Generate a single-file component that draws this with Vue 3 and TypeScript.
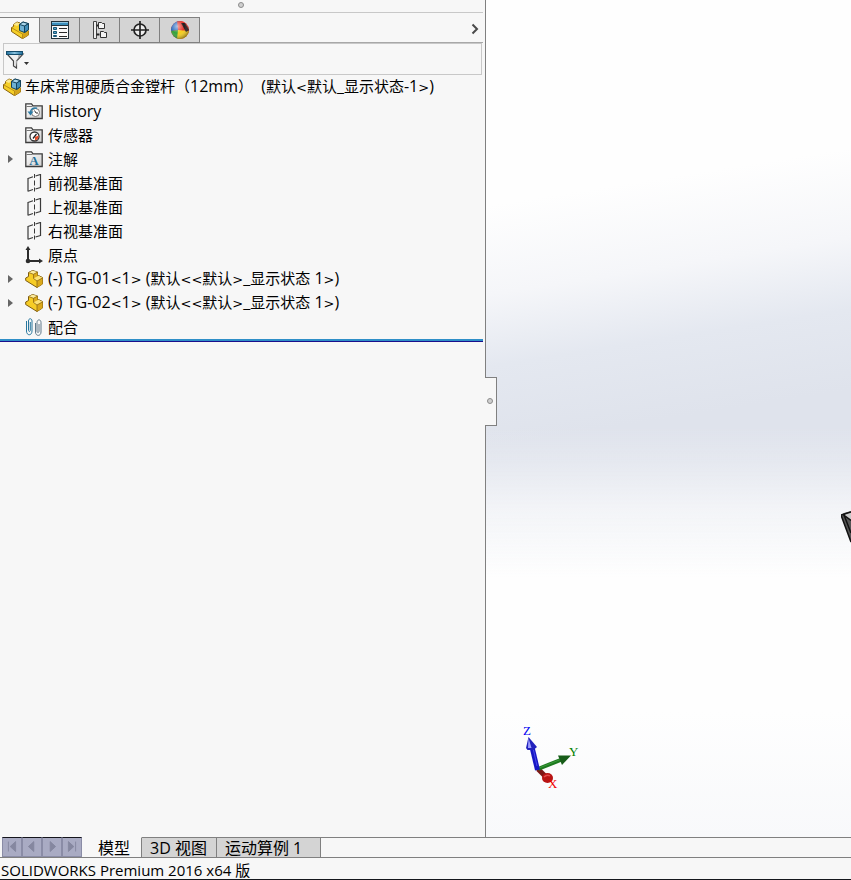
<script setup lang="ts">
import { ref } from 'vue'

interface TreeNode {
  label: string
  icon: string
  expandable?: boolean
}

interface TextRun {
  text: string
  kind: 'latin' | 'sign' | 'han'
}

const panelTabs = [
  { id: 'assembly', title: 'FeatureManager' },
  { id: 'property', title: 'PropertyManager' },
  { id: 'config', title: 'ConfigurationManager' },
  { id: 'dimxpert', title: 'DimXpertManager' },
  { id: 'display', title: 'DisplayManager' },
]
const activePanel = ref('assembly')
const filterText = ref('')

const rootLabel = '车床常用硬质合金镗杆（12mm）  (默认<默认_显示状态-1>)'
const nodes: TreeNode[] = [
  { label: 'History', icon: 'history' },
  { label: '传感器', icon: 'sensor' },
  { label: '注解', icon: 'notes', expandable: true },
  { label: '前视基准面', icon: 'plane' },
  { label: '上视基准面', icon: 'plane' },
  { label: '右视基准面', icon: 'plane' },
  { label: '原点', icon: 'origin' },
  { label: '(-) TG-01<1> (默认<<默认>_显示状态 1>)', icon: 'part', expandable: true },
  { label: '(-) TG-02<1> (默认<<默认>_显示状态 1>)', icon: 'part', expandable: true },
  { label: '配合', icon: 'mates' },
]

// Splits a label by script, so that each run gets its own size and family.
function runs(label: string): TextRun[] {
  const parts = label.match(/[<>]+|[\x20-\x3b=\x3f-\x7e]+|[^\x20-\x7e]+/g) ?? []
  return parts.map((text): TextRun => ({
    text,
    kind: /^[<>]/.test(text) ? 'sign' : /^[\x20-\x7e]/.test(text) ? 'latin' : 'han',
  }))
}

const navButtons = [
  { title: 'First', path: 'M6 4v11M14 4l-6 5.500 6 5.500z' },
  { title: 'Previous', path: 'M12 4l-6 5.500 6 5.500z' },
  { title: 'Next', path: 'M8 4l6 5.500-6 5.500z' },
  { title: 'Last', path: 'M6 4l6 5.500-6 5.500zM14 4v11' },
]
const sheets = ['模型', '3D 视图', '运动算例 1']
const activeSheet = ref('模型')
</script>

<template>
  <div class="app">
    <svg class="defs" aria-hidden="true">
      <defs>
        <linearGradient id="folderFill" x1="0" y1="0" x2="1" y2="1">
          <stop offset="0" stop-color="#ffffff" />
          <stop offset="1" stop-color="#cfcfcf" />
        </linearGradient>
        <linearGradient id="funnelTop" x1="0" x2="1">
          <stop offset="0" stop-color="#1e6f9c" />
          <stop offset="0.5" stop-color="#8cc4e0" />
          <stop offset="1" stop-color="#1e6f9c" />
        </linearGradient>
        <radialGradient id="ballShade" cx="0.35" cy="0.3" r="0.75">
          <stop offset="0" stop-color="#fff" stop-opacity="0.6" />
          <stop offset="0.5" stop-color="#fff" stop-opacity="0" />
          <stop offset="1" stop-color="#000" stop-opacity="0.45" />
        </radialGradient>
        <clipPath id="ballClip"><circle cx="9" cy="9" r="9" /></clipPath>
      </defs>
      <symbol id="assembly" viewBox="0 0 18 18">
        <path d="M.5 6.500 2.500 5.500V3.500L6 1l3 1v5l8.500 3v4l-6 3.700L.5 10.500z" fill="#f5cf28" stroke="#8a6310" />
        <path d="M2.500 3.500 6 1.200 9 2.500 6 5z" fill="#fbe98f" />
        <path d="M11.500 12v5.500L17.500 14V9z" fill="#d5a51b" />
        <path d="M1 7l10.500 6v4.500" fill="none" stroke="#b98d17" />
        <path d="M8.500 3.500 12 1l5.500 1.700v6L13.500 11.500 8.500 9.500z" fill="#6fb1d4" stroke="#14435c" />
        <path d="M8.500 3.500 13.500 5l4-2.300L12 1z" fill="#a9d5eb" stroke="#14435c" />
        <path d="M13.500 5l4-2.300v6L13.500 11.500z" fill="#418db8" stroke="#14435c" />
      </symbol>
      <symbol id="property" viewBox="0 0 18 18">
        <rect x=".5" y=".5" width="17" height="17" fill="#fbfbfb" stroke="#24333c" />
        <path d="M1 1h16v3H1z" fill="#3b8fbd" />
        <path d="M1 1.500h16" stroke="#8fc6e2" />
        <path d="M1 4.500h16" stroke="#24333c" />
        <path d="M2.500 6.500h3v2h-3zM2.500 10.500h3v2h-3zM2.500 14.500h3v1h-3z" fill="#5aa3c9" stroke="#175777" />
        <path d="M8 7.500h8M8 11.500h8M8 15.500h8" stroke="#2b2b2b" />
      </symbol>
      <symbol id="config" viewBox="0 0 18 18">
        <path d="M2.500.500h3v17h-3z" fill="#eee" stroke="#444" />
        <path d="M5.500 4.500h3M5.500 13.500h3" stroke="#222" stroke-width="2" />
        <path d="M7.500 1.500h3l1 1h2v5h-6zM9.500 10.500h3l1 1h2v5h-6z" fill="#f5f5f5" stroke="#333" />
      </symbol>
      <symbol id="dimxpert" viewBox="0 0 18 18">
        <circle cx="9" cy="9" r="6" fill="#eee" stroke="#222" stroke-width="1.7" />
        <path d="M9 0v18M0 9h18" stroke="#222" stroke-width="1.7" />
      </symbol>
      <symbol id="display" viewBox="0 0 18 18">
        <g clip-path="url(#ballClip)">
          <path d="M0 0h18v18H0z" fill="#e33127" />
          <path d="M0 0h9L8 9 0 10z" fill="#2a6cc0" />
          <path d="M6 0h10l-3 10-6-1z" fill="#e5352b" />
          <path d="M0 10l8-1 1 9H0z" fill="#36a13a" />
          <path d="M7 9l11 1v8H6z" fill="#f5cd1c" />
          <path d="M10 2l4 0 4 7-3 2z" fill="#241a1b" />
        </g>
        <circle cx="9" cy="9" r="9" fill="url(#ballShade)" />
      </symbol>
      <symbol id="folder" viewBox="0 0 18 18">
        <path d="M.8 16.500V1.800h5.700l1.500 2h9.200v12.700z" fill="url(#folderFill)" stroke="#3d3d3d" stroke-width="1.3" />
        <path d="M1.500 4.500h6" stroke="#777" />
      </symbol>
      <symbol id="history" viewBox="0 0 18 18">
        <use href="#folder" />
        <circle cx="10.500" cy="10.500" r="4" fill="#fff" stroke="#777" />
        <path d="M9.500 8.500l1.500 2.500h2" fill="none" stroke="#333" />
        <path d="M12 6.300C8.500 5 5.500 7 5.500 10.500" fill="none" stroke="#2b7ba5" stroke-width="1.5" />
        <path d="M2.500 9.500l3 4 3-4z" fill="#2b7ba5" />
      </symbol>
      <symbol id="sensor" viewBox="0 0 18 18">
        <use href="#folder" />
        <circle cx="9.500" cy="10.500" r="4.500" fill="#fff" stroke="#333" stroke-width="1.3" />
        <path d="M10 11l3.500-1.500c.5 2.500-1 4.500-3.500 5z" fill="#e34a28" />
        <path d="M8 12.500l3.500-4.500" stroke="#222" stroke-width="1.3" />
      </symbol>
      <symbol id="plane" viewBox="0 0 18 18">
        <path d="M3 4v13.500M3 4.500l5-1.700M10.500 2l5-1.500V14M3 17.200l5-1.700M10.500 15l5-1.500" fill="none" stroke="#3a3a3a" stroke-width="1.2" />
        <path d="M9.500 0v4M9.500 6.500v5M9.500 13.500v4" stroke="#3a3a3a" />
      </symbol>
      <symbol id="origin" viewBox="0 0 18 18">
        <path d="M3 3v12h12" fill="none" stroke="#2d2d2d" stroke-width="2" />
        <path d="M3 0l2.500 4H.5zM18 15l-4-2.500v5z" fill="#2d2d2d" />
        <circle cx="3" cy="15" r="2.300" fill="#2d2d2d" />
      </symbol>
      <symbol id="part" viewBox="0 0 18 18">
        <path d="M3.500 2.500 7.500.5 12.500 2v4l1-.5 4 2V14L12 17.500.700 10.500V8L3.500 6.500z" fill="#f6cc26" stroke="#7c5a12" />
        <path d="M3.500 2.500 7.500.8l5 1.300-4 2.200z" fill="#fcec9f" />
        <path d="M8.500 4.300v4.200L12.500 6.500V2.200z" fill="#dbab1e" />
        <path d="M8.500 8.500l5-2.700 4 2L12 11z" fill="#fbe27a" />
        <path d="M12 11v6.500l5.500-3.500V8z" fill="#dba91b" />
        <path d="M3.500 2.500l5 1.800v4.200L12 11v6.500M8.500 4.300l4-2.200M12 11l5.500-3" fill="none" stroke="#8e6816" stroke-width=".8" />
      </symbol>
      <symbol id="mates" viewBox="0 0 18 18">
        <path d="M1.500 3v10c0 5 5.500 5 5.500 0V3C7 0 3.500 0 3.500 3v9c0 2 1.800 2 1.800 0V4" fill="none" stroke="#28779e" />
        <path d="M10.500 5v9c0 4.500 5.500 4.500 5.500 0V4.500c0-3.500-4-3.500-4 0V13c0 2 2 2 2 0V6" fill="none" stroke="#60798a" />
      </symbol>
    </svg>

    <main class="workspace">
      <aside class="panel">
        <div class="grip"><span class="dot"></span></div>
        <div class="tab-row">
          <button
            v-for="tab in panelTabs"
            :key="tab.id"
            type="button"
            class="panel-tab"
            :class="{ active: activePanel === tab.id }"
            :aria-label="tab.title"
            @click="activePanel = tab.id"
          >
            <svg class="icon"><use :href="'#' + tab.id" /></svg>
          </button>
          <button type="button" class="more" aria-label="More tabs">
            <svg viewBox="0 0 8 12"><path d="M1.500 1.500 6 6l-4.500 4.500" fill="none" stroke="#4a4a4a" stroke-width="2" /></svg>
          </button>
        </div>
        <div class="filter">
          <button type="button" class="filter-button" aria-label="Filter options">
            <svg viewBox="0 0 24 20">
              <path d="M1 5h16l-6.500 7v7L7.500 17v-5z" fill="#f2f2f2" stroke="#444" stroke-width="1.2" />
              <path d="M12.500 6h3L10 12v6z" fill="#aaa" />
              <rect x=".5" y="2.500" width="16" height="3" fill="url(#funnelTop)" stroke="#174e6d" />
              <path d="M18 13h5l-2.500 3z" fill="#333" />
            </svg>
          </button>
          <input v-model="filterText" type="text" aria-label="Filter" />
        </div>
        <div class="tree-root">
          <svg class="icon"><use href="#assembly" /></svg>
          <span><span v-for="(run, i) in runs(rootLabel)" :key="i" :class="run.kind">{{ run.text }}</span></span>
        </div>
        <ul class="tree">
          <li v-for="node in nodes" :key="node.label">
            <button v-if="node.expandable" type="button" class="expander" :aria-label="'Expand ' + node.label">
              <svg viewBox="0 0 5 8"><path d="M0 0l5 4-5 4z" fill="#666" /></svg>
            </button>
            <span v-else class="expander"></span>
            <svg v-if="node.icon === 'notes'" class="icon" viewBox="0 0 18 18">
              <use href="#folder" />
              <text x="9" y="15" text-anchor="middle" class="note-letter">A</text>
            </svg>
            <svg v-else class="icon"><use :href="'#' + node.icon" /></svg>
            <span><span v-for="(run, i) in runs(node.label)" :key="i" :class="run.kind">{{ run.text }}</span></span>
          </li>
        </ul>
        <div class="rollback"></div>
      </aside>

      <section class="viewport">
        <button type="button" class="splitter" aria-label="Collapse panel"><span class="dot"></span></button>
        <svg class="model" viewBox="0 0 10 32">
          <path d="M0 4 3 2l7-2v32L8 25z" fill="#555" />
          <path d="M3 4l7-3v8z" fill="#c9c9c9" />
          <path d="M0 4l10-3M0 4l10 27M2 3.500l8 6M3 4l7 18" fill="none" stroke="#111" stroke-width="1.5" />
        </svg>
        <svg class="triad" viewBox="0 0 60 70">
          <path d="M18 47l8 8" stroke="#7d1717" stroke-width="5" />
          <path d="M18 47l25-10" stroke="#1d7a1f" stroke-width="4" />
          <path d="M19 46l24-9.500" stroke="#3b9b3b" />
          <path d="M38 33.500l13 0-9 9.500z" fill="#175c19" />
          <path d="M17.500 48 12 25" stroke="#1717c4" stroke-width="5" />
          <path d="M17 44l-4-18" stroke="#4747ea" />
          <path d="M8.500 15 17 25l-3.500 3H7.500l-1.500-2z" fill="#2222bd" />
          <path d="M8.500 16l3 10H8z" fill="#a0a0ff" />
          <ellipse cx="27.500" cy="56" rx="5.500" ry="5" fill="#b81414" />
          <path d="M24 55q3-3 6-1" fill="none" stroke="#e34b4b" stroke-width="1.5" />
          <text x="3" y="13" fill="#0000f0">Z</text>
          <text x="49" y="34" fill="#008000">Y</text>
          <text x="28" y="66" fill="#f00000">X</text>
        </svg>
      </section>
    </main>

    <nav class="sheet-bar">
      <div class="sheet-nav">
        <button v-for="item in navButtons" :key="item.title" type="button" :aria-label="item.title">
          <svg viewBox="0 0 20 20"><path :d="item.path" fill="#85879f" stroke="#85879f" stroke-width="1" /></svg>
        </button>
      </div>
      <button
        v-for="sheet in sheets"
        :key="sheet"
        type="button"
        class="sheet"
        :class="{ active: activeSheet === sheet }"
        @click="activeSheet = sheet"
      >{{ sheet }}</button>
      <div class="sheet-rest"></div>
    </nav>
    <footer class="status">SOLIDWORKS Premium 2016 x64 版</footer>
  </div>
</template>

<style>
body {
  margin: 0;
}
</style>

<style scoped>
.app {
  display: flex;
  flex-direction: column;
  height: 100vh;
  overflow: hidden;
  background: #f7f7f7;
  color: #000;
  font-family: "Open Sans", "Noto Sans CJK SC", sans-serif;
  font-size: 15px;
  line-height: 24px;
}

.defs {
  position: absolute;
  width: 0;
  height: 0;
}

button {
  box-sizing: border-box;
  margin: 0;
  padding: 0;
  border: 0;
  background: none;
  color: inherit;
  font: inherit;
}

svg {
  display: block;
}

.icon {
  flex: none;
  width: 18px;
  height: 18px;
}

.note-letter {
  fill: #1f6f99;
  font: bold 13px "Liberation Serif", serif;
}

.latin {
  font-size: 16px;
}

.sign {
  font-family: "DejaVu Sans", sans-serif;
  font-size: 13px;
}

.dot {
  box-sizing: border-box;
  width: 6px;
  height: 6px;
  border: 1px solid #8c8c8c;
  border-radius: 50%;
  background: #d0d0d0;
}

.workspace {
  flex: 1;
  display: flex;
  min-height: 0;
}

.panel {
  box-sizing: border-box;
  flex: 0 0 57.1%;
  min-width: 0;
  padding-right: 2px;
  border-right: 1px solid #808080;
}

.grip {
  display: flex;
  justify-content: center;
  align-items: center;
  height: 10px;
  padding-bottom: 2px;
  border-bottom: 1px solid #c8c8c8;
}

.tab-row {
  display: flex;
  height: 25px;
  margin-top: 4px;
  border-bottom: 1px solid #a8a8a8;
}

.panel-tab {
  display: flex;
  justify-content: center;
  align-items: center;
  width: 40px;
  height: 26px;
  border: 1px solid #808080;
  border-left: 0;
  background: #d4d4d4;
}

.panel-tab.active {
  border-bottom-color: #f7f7f7;
  background: #f7f7f7;
}

.more {
  margin-left: auto;
  padding: 0 4px 2px;
}

.more svg {
  width: 8px;
  height: 12px;
}

.filter {
  display: flex;
  align-items: center;
  height: 30px;
  margin: 0 1px 0 3px;
  border: 1px solid #c8c8c8;
}

.filter-button {
  padding: 0 2px;
}

.filter-button svg {
  width: 24px;
  height: 20px;
}

.filter input {
  flex: 1;
  min-width: 0;
  padding: 0;
  border: 0;
  outline: 0;
  background: transparent;
  font: inherit;
}

.tree-root,
.tree li {
  display: flex;
  align-items: center;
  height: 24px;
  white-space: pre;
}

.tree-root {
  gap: 4px;
  padding-left: 3px;
}

.tree {
  margin: 0;
  padding: 0;
  list-style: none;
}

.tree li {
  gap: 5px;
}

.expander {
  display: flex;
  justify-content: center;
  width: 20px;
}

.expander svg {
  width: 5px;
  height: 8px;
}

.rollback {
  height: 2px;
  border-bottom: 1px solid #1a0f8c;
  background: #2f8fc8;
}

.viewport {
  position: relative;
  flex: 1;
  min-width: 0;
  background:
    linear-gradient(rgba(254, 254, 254, 0) 51%, rgba(254, 254, 254, 0.2) 55%, rgba(254, 254, 254, 0.65) 61%, #fefefe 69%, #fefefe 85%, #f8f9fb 100%),
    linear-gradient(171deg, #fefefe 23%, #f5f6f9 33%, #e4e8f0 41%, #dfe3ec 50%);
}

.splitter {
  position: absolute;
  top: 45%;
  left: -1px;
  display: flex;
  justify-content: center;
  align-items: center;
  width: 12px;
  height: 49px;
  border: 1px solid #808080;
  border-left: 0;
  background: #f7f7f7;
}

.model {
  position: absolute;
  top: 61%;
  right: 0;
  width: 10px;
  height: 32px;
}

.triad {
  position: absolute;
  left: 34px;
  bottom: 45px;
  width: 60px;
  height: 70px;
  font: 13px "Liberation Serif", serif;
}

.sheet-bar {
  display: flex;
  height: 20px;
  border-bottom: 1px solid #808080;
  font-size: 16px;
  line-height: 20px;
}

.sheet-nav {
  display: flex;
  padding-left: 2px;
}

.sheet-nav button {
  width: 20px;
  border: 1px solid #8a8ca6;
  border-top-color: #15151c;
  background: #a9abc3;
}

.sheet-nav svg {
  width: 18px;
  height: 18px;
}

.sheet {
  padding: 0 9px 0 8px;
  border-top: 1px solid #808080;
  border-right: 1px solid #808080;
  background: #d4d4d4;
  white-space: nowrap;
}

.sheet.active {
  padding: 0 11px 0 16px;
  border-top-color: #f7f7f7;
  background: #f7f7f7;
}

.sheet:nth-last-child(2) {
  padding-right: 18px;
}

.sheet-rest {
  flex: 1;
  border-top: 1px solid #808080;
}

.status {
  height: 21px;
  padding-left: 1px;
  border-bottom: 1px solid #15181d;
  line-height: 24px;
  white-space: nowrap;
}
</style>
